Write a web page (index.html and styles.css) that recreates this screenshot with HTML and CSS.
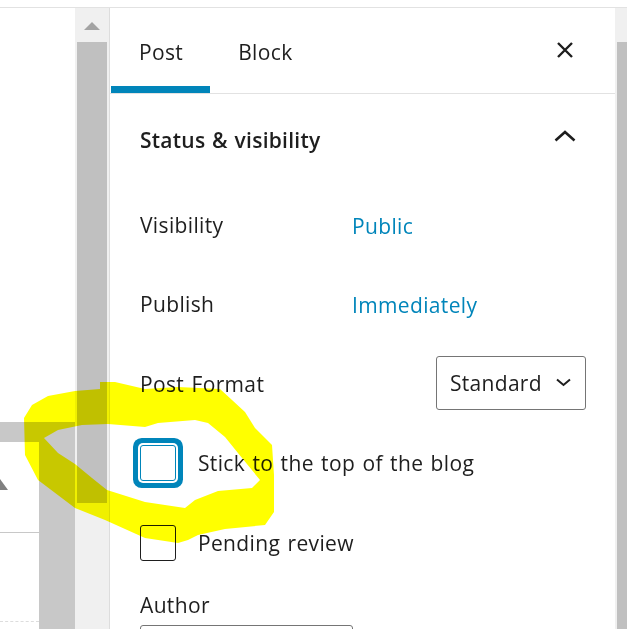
FILE: index.html
```html
<!DOCTYPE html>
<html lang="en">
<head>
    <meta charset="UTF-8">
    <meta name="viewport" content="width=device-width, initial-scale=1.0">
    <title>Post settings</title>
    <link rel="stylesheet" href="styles.css">
</head>
<body>
    <div class="window">
        <div class="left-pane">
            <div class="hbar"></div>
            <div class="left-lower">
                <div class="left-stub">
                    <div class="stub-arrow"></div>
                    <div class="stub-line"></div>
                    <div class="stub-dash"></div>
                </div>
                <div class="left-thumb"></div>
            </div>
        </div>
        <div class="scrollbar">
            <div class="scroll-up"><div class="arrow-up"></div></div>
            <div class="scroll-thumb"></div>
        </div>
        <aside class="sidebar">
            <div class="tabs">
                <div class="tab active">Post</div>
                <div class="tab">Block</div>
                <svg class="close" width="18" height="18" viewBox="0 0 18 18"><path d="M2 2l14 14M16 2L2 16" fill="none" stroke="#1e1e1e" stroke-width="2.4"/></svg>
            </div>
            <div class="panel">
                <div class="panel-head">
                    <h2>Status &amp; visibility</h2>
                    <svg class="collapse" width="22" height="12" viewBox="0 0 22 12"><path d="M1.500 10.500L11 2l9.500 8.500" fill="none" stroke="#1e1e1e" stroke-width="2.6"/></svg>
                </div>
                <div class="row"><span class="label">Visibility</span><a class="link">Public</a></div>
                <div class="row"><span class="label">Publish</span><a class="link">Immediately</a></div>
                <div class="row format-row">
                    <span class="label">Post Format</span>
                    <div class="select">Standard
                        <svg width="15" height="9" viewBox="0 0 15 9"><path d="M1 1.500l6.500 5.500L14 1.500" fill="none" stroke="#1e1e1e" stroke-width="2"/></svg>
                    </div>
                </div>
                <div class="check-row stick"><span class="box focused"></span><span>Stick to the top of the blog</span></div>
                <div class="check-row pending"><span class="box"></span><span>Pending review</span></div>
                <div class="author">Author</div>
                <div class="author-input"></div>
            </div>
        </aside>
        <div class="scrollbar-right"><div class="right-thumb"></div></div>
    </div>

    <!-- highlighter scribble drawn over the screenshot -->
    <svg class="scribble" width="627" height="629" viewBox="0 0 627 629">
        <path fill="#ffff00" fill-rule="evenodd" d="M100 382L115 382L145 389L178 387L220 389L232 400L245 412L255 428L272 445L274 475L274 512L265 525L225 529L198 535L188 540L178 543L145 538L105 520L75 508L38 480L25 455L24 418L32 405L48 396L75 391L100 389Z M44 438L58 430L82 425L108 424L145 427L158 423L195 420L208 423L225 437L242 458L260 480L252 488L218 491L195 500L185 508L145 502L107 490L92 478L75 464L58 453Z"/>
    </svg>
</body>
</html>
```

FILE: styles.css
```css
body {
    margin: 0;
    padding-top: 7px;
    height: 622px;
    overflow: hidden;
    background-color: #fff;
    font-family: "Open Sans", "Noto Sans", sans-serif;
    letter-spacing: 0.35px;
    word-spacing: 1.5px;
    color: #1e1e1e;
    position: relative;
}
.window {
    display: flex;
    height: 621px;
    border-top: 1px solid #e2e2e2;
}
.left-pane {
    width: 75px;
    padding-top: 414px;
    box-sizing: border-box;
}
.hbar {
    height: 20px;
    background-color: #c8c8c8;
}
.left-lower {
    display: flex;
    height: 187px;
}
.left-stub {
    width: 39px;
    padding-top: 37px;
}
.stub-arrow {
    width: 0;
    height: 0;
    border-left: 8px solid transparent;
    border-right: 8px solid transparent;
    border-bottom: 11px solid #808080;
    margin-left: -8px;
}
.stub-line {
    margin-top: 42px;
    border-top: 1px solid #c8c8c8;
}
.stub-dash {
    margin-top: 88px;
    border-top: 1px dashed #ddd;
}
.left-thumb {
    width: 36px;
    background-color: #c8c8c8;
}
.scrollbar {
    width: 34px;
    background-color: #f0f0f0;
    border-right: 1px solid #ddd;
}
.scroll-up {
    height: 34px;
    display: flex;
    justify-content: center;
    padding-top: 14px;
    box-sizing: border-box;
}
.arrow-up {
    width: 0;
    height: 0;
    border-left: 8px solid transparent;
    border-right: 8px solid transparent;
    border-bottom: 8px solid #a3a3a3;
}
.scroll-thumb {
    width: 30px;
    height: 461px;
    margin-left: 2px;
    background-color: #c0c0c0;
}
.sidebar {
    flex: 1;
    min-width: 0;
    overflow: hidden;
}
.tabs {
    display: flex;
    align-items: center;
    height: 85px;
    padding-left: 1px;
    border-bottom: 1px solid #e2e2e2;
}
.tab {
    padding: 0 27px 0 28px;
    height: 85px;
    line-height: 88px;
    font-size: 21px;
    box-sizing: border-box;
}
.tab.active {
    border-bottom: 7px solid #0085ba;
}
.close {
    margin-left: auto;
    margin-right: 41px;
    margin-top: -2px;
}
.panel {
    padding: 0 29px 0 30px;
}
.panel-head {
    display: flex;
    justify-content: space-between;
    align-items: center;
    height: 92px;
    padding-right: 10px;
}
.panel-head h2 {
    margin: 0;
    font-size: 21px;
    font-weight: 600;
    letter-spacing: 0.25px;
    word-spacing: 1px;
}
.collapse {
    margin-top: -8px;
}
.row {
    display: flex;
    align-items: center;
    height: 79px;
    font-size: 21px;
}
.row .label {
    width: 212px;
    margin-top: -2px;
}
.format-row {
    justify-content: space-between;
}
.format-row .label {
    width: auto;
    margin-top: 0;
}
.link {
    color: #0085ba;
}
.select {
    display: flex;
    align-items: center;
    justify-content: space-between;
    width: 150px;
    height: 54px;
    margin-top: -2px;
    padding: 0 14px 0 13px;
    box-sizing: border-box;
    border: 1px solid #757575;
    border-radius: 3px;
    letter-spacing: 0.3px;
}
.check-row {
    display: flex;
    align-items: center;
    gap: 22px;
    font-size: 21px;
    height: 36px;
}
.stick {
    margin-top: 22px;
}
.pending {
    margin-top: 44px;
}
.box {
    width: 36px;
    height: 36px;
    box-sizing: border-box;
    border: 1px solid #1e1e1e;
    border-radius: 3px;
    background-color: #fff;
}
.box.focused {
    border-color: #0085ba;
    box-shadow: 0 0 0 2px #fff, 0 0 0 7px #0085ba;
}
.author {
    margin-top: 30px;
    font-size: 21px;
}
.author-input {
    width: 213px;
    height: 30px;
    margin-top: 6px;
    box-sizing: border-box;
    border: 1px solid #757575;
    border-radius: 3px;
}
.scrollbar-right {
    width: 12px;
    background-color: #f0f0f0;
    padding-top: 34px;
    box-sizing: border-box;
}
.right-thumb {
    margin-left: 2px;
    height: 100%;
    background-color: #c0c0c0;
}
.scribble {
    position: absolute;
    left: 0;
    top: 0;
    mix-blend-mode: multiply;
    pointer-events: none;
}
```
